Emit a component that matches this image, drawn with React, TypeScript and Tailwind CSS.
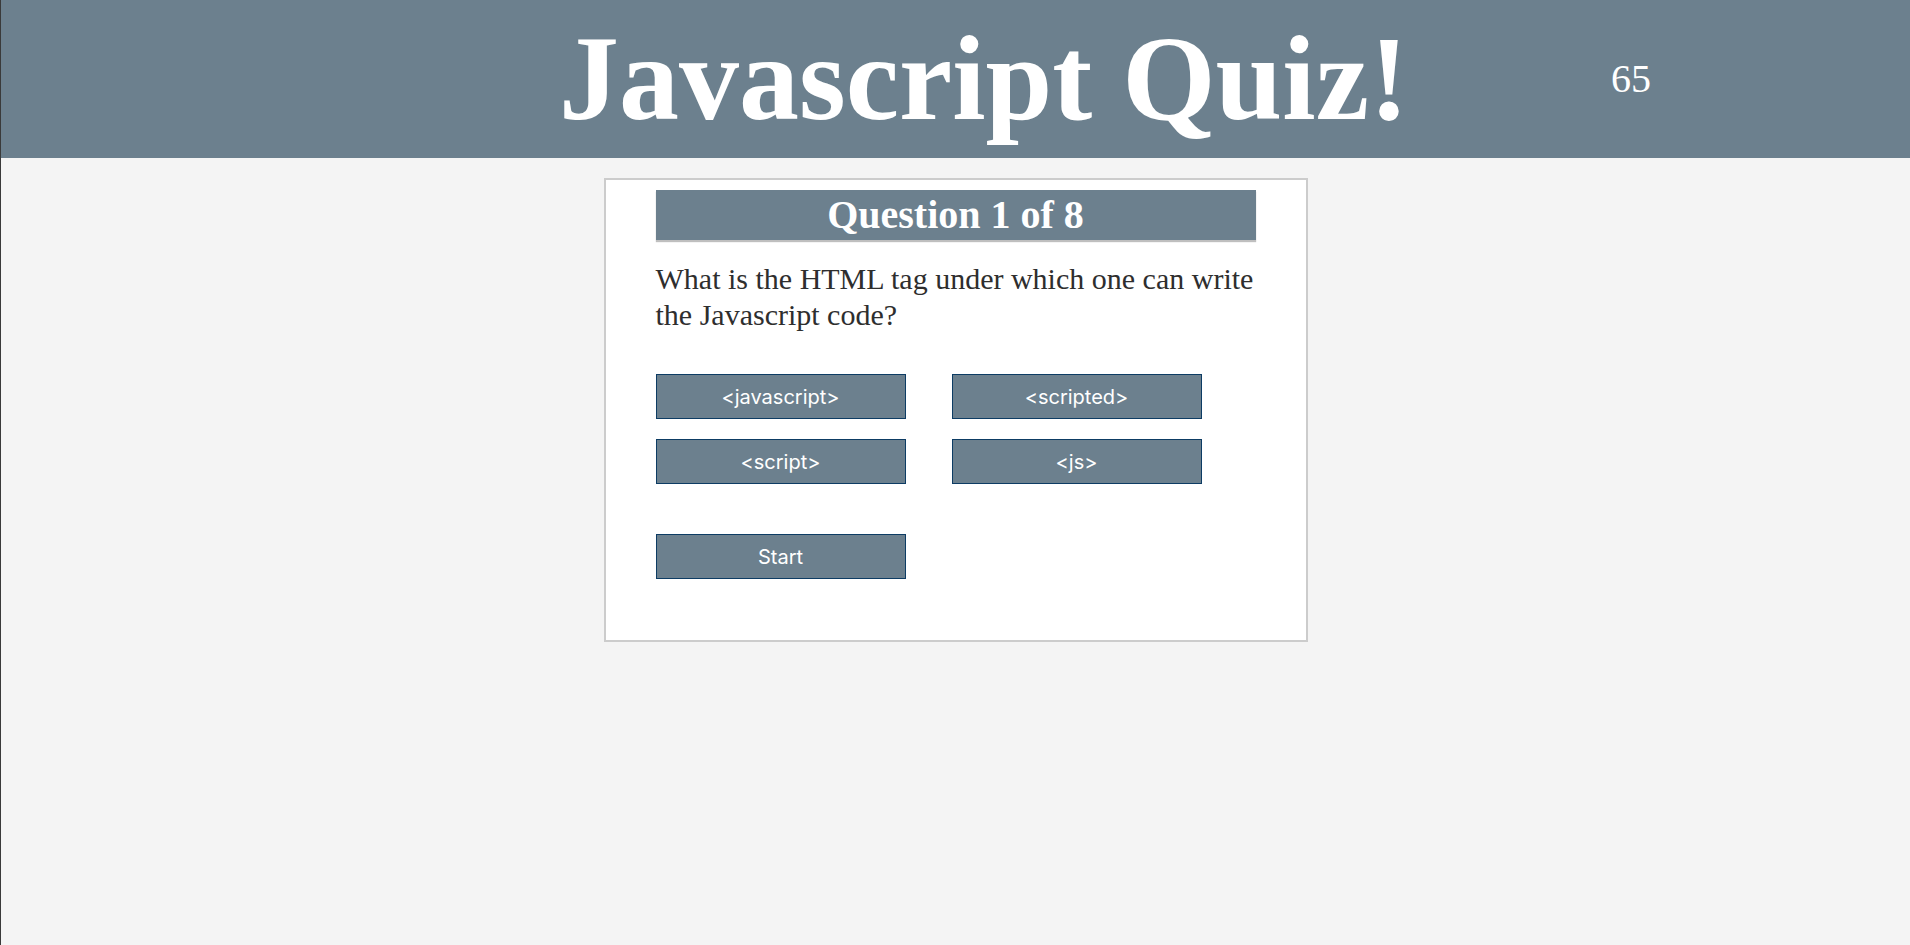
const answers = ["<javascript>", "<scripted>", "<script>", "<js>"];

function AnswerButton({ label }: { label: string }) {
  return (
    <button className="w-[250px] h-[45px] flex items-center justify-center bg-[#6c808e] border border-[#0d3c64] text-white text-[20px] font-['Inter',sans-serif]">
      {label}
    </button>
  );
}

export default function App() {
  return (
    <div className="min-h-[945px] bg-[#f4f4f4] border-l border-[#3a3a3a] font-['Liberation_Serif',serif]">
      <header className="h-[158px] bg-[#6c808e] flex items-center">
        <h1 className="ml-[558px] text-[120px] font-bold leading-none text-white">
          Javascript Quiz!
        </h1>
        <div className="ml-[202px] text-[40px] leading-none text-white">65</div>
      </header>

      <div className="flex justify-center pt-[20px]">
        <div className="w-[704px] bg-white border-2 border-[#cccccc] px-[50px] pt-[10px] pb-[61px]">
          <h2 className="h-[50px] bg-[#6c808e] text-white text-[40px] font-bold leading-[50px] text-center shadow-[0_2px_1px_rgba(0,0,0,0.25)]">
            Question 1 of 8
          </h2>
          <p className="mt-[21px] text-[30px] leading-[36px] text-[#2e2e2e]">
            What is the HTML tag under which one can write the Javascript code?
          </p>
          <div className="mt-[41px] flex flex-wrap w-[546px] gap-x-[46px] gap-y-[20px]">
            {answers.map((answer, index) => (
              <AnswerButton key={`${answer}_${index}`} label={answer} />
            ))}
          </div>
          <div className="mt-[50px]">
            <AnswerButton label="Start" />
          </div>
        </div>
      </div>
    </div>
  );
}
